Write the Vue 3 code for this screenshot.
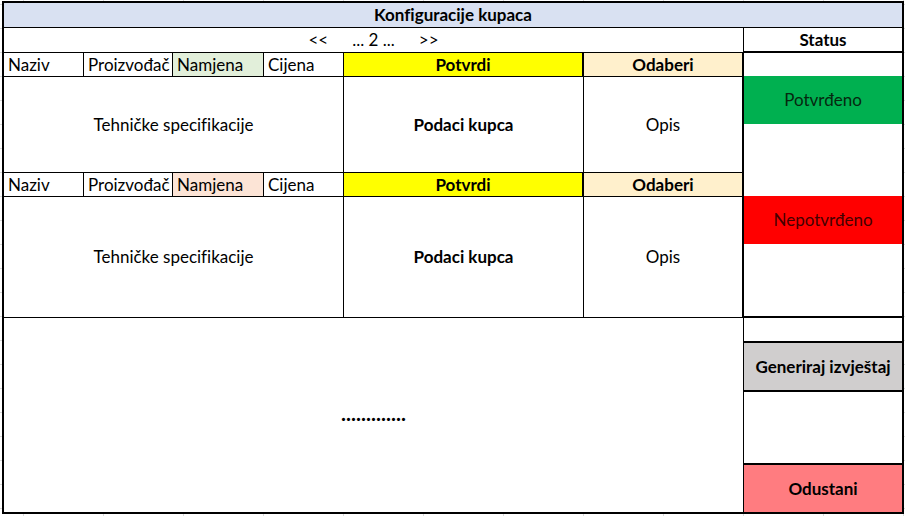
<script setup>
import { ref } from 'vue'

const page = ref(2)
const records = [
  { id: 1, tone: 'green', tall: false },
  { id: 2, tone: 'peach', tall: true },
]
</script>

<template>
  <div class="sheet">
    <main class="frame">
      <h1 class="title">Konfiguracije kupaca</h1>
      <div class="body">
        <section class="main">
          <nav class="pager">
            <button type="button" @click="page--">&lt;&lt;</button>
            <span>... {{ page }} ...</span>
            <button type="button" @click="page++">&gt;&gt;</button>
          </nav>
          <article v-for="r in records" :key="r.id" class="record" :class="{ tall: r.tall }">
            <div class="cell name">Naziv</div>
            <div class="cell name">Proizvođač</div>
            <div class="cell name" :class="r.tone">Namjena</div>
            <div class="cell name">Cijena</div>
            <button type="button" class="cell confirm">Potvrdi</button>
            <button type="button" class="cell select">Odaberi</button>
            <div class="cell specs">Tehničke specifikacije</div>
            <div class="cell strong">Podaci kupca</div>
            <div class="cell">Opis</div>
          </article>
          <div class="more">.............</div>
        </section>
        <aside class="side">
          <h2 class="status">Status</h2>
          <div class="state"><span class="badge ok">Potvrđeno</span></div>
          <div class="state last"><span class="badge no">Nepotvrđeno</span></div>
          <div class="spacer"></div>
          <button type="button" class="report">Generiraj izvještaj</button>
          <div class="fill"></div>
          <button type="button" class="cancel">Odustani</button>
        </aside>
      </div>
    </main>
  </div>
</template>

<style>
body {
  margin: 0;
}
</style>

<style scoped>
.sheet {
  box-sizing: border-box;
  display: flex;
  min-height: 100vh;
  padding: 1px 1px 2px 2px;
  font: 17px/22px Lato, Carlito, sans-serif;
  font-variant-ligatures: none;
  color: #000;
  background:
    linear-gradient(#d9d9d9, #d9d9d9) 0 4px / 100% 1px no-repeat,
    repeating-linear-gradient(to bottom, transparent 0 23px, #d9d9d9 23px 24px) 0 5px,
    repeating-linear-gradient(to right, transparent 0 79px, #d9d9d9 79px 80px) 24px 0 / 800px 100%,
    #fff;
}

.frame {
  flex: 1;
  display: flex;
  flex-direction: column;
  border: 2px solid #000;
  background: #fff;
}

h1,
h2 {
  margin: 0;
  font-size: 17px;
  font-weight: 700;
  text-align: center;
}

button {
  margin: 0;
  padding: 0;
  border: 0;
  border-radius: 0;
  background: none;
  font: inherit;
  font-variant-ligatures: none;
  color: inherit;
  cursor: pointer;
}

.title {
  padding: 1px 0;
  border-bottom: 1px solid #000;
  background: #d9e1f2;
}

.body {
  flex: 1;
  display: grid;
  grid-template-columns: minmax(0, 740fr) minmax(0, 158fr);
}

.main {
  display: flex;
  flex-direction: column;
  border-right: 1px solid #000;
}

.pager {
  display: flex;
  justify-content: center;
  align-items: center;
  gap: 24px;
  height: 24px;
  border-bottom: 1px solid #000;
}

.record {
  display: grid;
  grid-template-columns:
    minmax(0, 80fr) minmax(0, 89fr) minmax(0, 91fr) minmax(0, 80fr)
    minmax(0, 240fr) minmax(0, 159fr);
  grid-template-rows: 24px 96px;
}

.record.tall {
  grid-template-rows: 24px 121px;
}

.cell {
  display: flex;
  align-items: center;
  justify-content: center;
  border-right: 1px solid #000;
  border-bottom: 1px solid #000;
}

.name {
  justify-content: flex-start;
  padding-left: 4px;
  white-space: nowrap;
}

.green {
  background: #e2efda;
}

.peach {
  background: #fce4d6;
}

.confirm {
  border-right-width: 2px;
  background: #ff0;
  font-weight: 700;
}

.select {
  background: #fff0cc;
  font-weight: 700;
}

.specs {
  grid-column: span 4;
}

.strong {
  font-weight: 700;
}

.more {
  flex: 1;
  display: flex;
  align-items: center;
  justify-content: center;
  padding-bottom: 4px;
  font-size: 21px;
  font-weight: 700;
}

.side {
  display: flex;
  flex-direction: column;
  box-shadow: 0 -1px 0 #000;
}

.status {
  padding-top: 1px;
  border-bottom: 2px solid #000;
}

.state {
  height: 97px;
  padding-top: 23px;
}

.state.last {
  box-sizing: border-box;
  height: 145px;
  border-bottom: 2px solid #000;
}

.badge {
  display: flex;
  align-items: center;
  justify-content: center;
  height: 48px;
}

.ok {
  background: #00b050;
  color: #06280f;
}

.no {
  background: #f00;
  color: #400;
}

.spacer {
  height: 23px;
  border-bottom: 2px solid #000;
}

.report,
.cancel {
  height: 49px;
  font-weight: 700;
}

.report {
  border-bottom: 2px solid #000;
  background: #d0cece;
}

.fill {
  flex: 1;
  border-bottom: 2px solid #000;
}

.cancel {
  height: 47px;
  background: #ff7c80;
}
</style>
